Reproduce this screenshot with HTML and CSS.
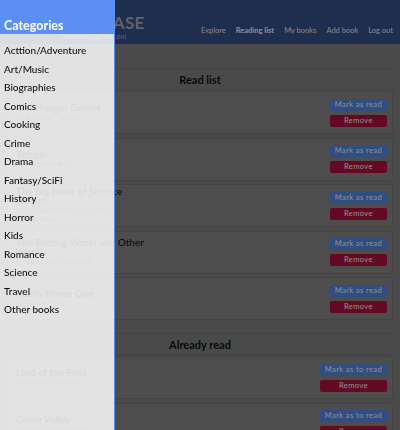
FILE: index.html
```html
<!DOCTYPE html>
<html lang="en">
<head>
<meta charset="utf-8">
<title>Bookbase - Reading list</title>
<link rel="stylesheet" href="styles.css">
</head>
<body>
<div class="page">
  <header class="topbar">
    <div class="brand">
      <div class="brand-name">BOOKBASE</div>
      <div class="brand-mail">bookbase@gmail.com</div>
    </div>
    <nav class="nav">
      <a>Explore</a>
      <a class="active">Reading list</a>
      <a>My books</a>
      <a>Add book</a>
      <a>Log out</a>
    </nav>
  </header>
  <main class="main">
    <section class="section">
      <h2 class="section-title">Read list</h2>
      <div class="card">
        <div class="book"><div class="book-title">The Hunger Games</div><div class="book-author">by Suzanne Collins</div></div>
        <div class="actions"><button class="btn btn-blue">Mark as read</button><button class="btn btn-red">Remove</button></div>
      </div>
      <div class="card">
        <div class="book"><div class="book-title">Temple</div><div class="book-author">by Matthew Reilly</div></div>
        <div class="actions"><button class="btn btn-blue">Mark as read</button><button class="btn btn-red">Remove</button></div>
      </div>
      <div class="card">
        <div class="book"><div class="book-title">The Big Book of Science Fiction</div><div class="book-author">by Jeff VanderMeer and Ann VanderMeer</div></div>
        <div class="actions"><button class="btn btn-blue">Mark as read</button><button class="btn btn-red">Remove</button></div>
      </div>
      <div class="card">
        <div class="book"><div class="book-title">The Blazing World and Other Worlds</div><div class="book-author">by Margaret Cavendish</div></div>
        <div class="actions"><button class="btn btn-blue">Mark as read</button><button class="btn btn-red">Remove</button></div>
      </div>
      <div class="card">
        <div class="book"><div class="book-title">Ready Player One</div><div class="book-author">by Ernest Cline</div></div>
        <div class="actions"><button class="btn btn-blue">Mark as read</button><button class="btn btn-red">Remove</button></div>
      </div>
    </section>
    <section class="section">
      <h2 class="section-title">Already read</h2>
      <div class="card">
        <div class="book"><div class="book-title">Lord of the Flies</div><div class="book-author">by William Golding</div></div>
        <div class="actions"><button class="btn btn-blue">Mark as to read</button><button class="btn btn-red">Remove</button></div>
      </div>
      <div class="card">
        <div class="book"><div class="book-title">Cedar Valley</div><div class="book-author">by Holly Chamberlain</div></div>
        <div class="actions"><button class="btn btn-blue">Mark as to read</button><button class="btn btn-red">Remove</button></div>
      </div>
    </section>
  </main>
</div>
<div class="overlay"></div>
<aside class="sidebar">
  <div class="sidebar-head">Categories</div>
  <ul class="cat-list">
    <li>Acttion/Adventure</li>
    <li>Art/Music</li>
    <li>Biographies</li>
    <li>Comics</li>
    <li>Cooking</li>
    <li>Crime</li>
    <li>Drama</li>
    <li>Fantasy/SciFi</li>
    <li>History</li>
    <li>Horror</li>
    <li>Kids</li>
    <li>Romance</li>
    <li>Science</li>
    <li>Travel</li>
    <li>Other books</li>
  </ul>
</aside>
</body>
</html>
```

FILE: styles.css
```css
* { box-sizing: border-box; }
html, body {
  margin: 0;
  padding: 0;
  width: 400px;
  height: 430px;
  overflow: hidden;
  font-family: "Lato", "Noto Sans", sans-serif;
  background: #888888;
}
.page {
  width: 400px;
}
.topbar {
  height: 44px;
  background: #385491;
  display: flex;
  justify-content: space-between;
  align-items: flex-end;
  padding: 0 7px 9px 50px;
}
.brand {
  display: flex;
  flex-direction: column;
  line-height: 1;
}
.brand-name {
  font-size: 17px;
  font-weight: 700;
  color: #b0b3bd;
  letter-spacing: 0.3px;
}
.brand-mail {
  font-size: 7px;
  color: #b0b3bd;
  margin-top: 2px;
  margin-bottom: -5px;
  padding-left: 10px;
}
.nav {
  display: flex;
  gap: 10px;
  padding-bottom: 0;
}
.nav a {
  font-size: 7.5px;
  color: #f2f2f2;
}
.nav a.active {
  font-weight: 700;
  color: #ffffff;
}
.main {
  padding: 24px 7px 0 7px;
}
.section + .section {
  margin-top: 13px;
}
.section-title {
  margin: 0 0 1px 0;
  height: 22px;
  line-height: 22px;
  text-align: center;
  font-size: 11px;
  font-weight: 700;
  color: #111111;
  border-top: 1px solid #7a7a7a;
  border-bottom: 1px solid #7a7a7a;
}
.card {
  display: flex;
  justify-content: space-between;
  align-items: center;
  height: 43px;
  background: #8d8d8d;
  border: 1px solid #7a7a7a;
  border-radius: 3px;
  padding: 0 5px 0 8px;
  margin-bottom: 3.5px;
}
.book {
  max-width: 128px;
}
.book-title {
  font-size: 10px;
  font-weight: 500;
  color: #141414;
  line-height: 9px;
}
.book-author {
  font-size: 8px;
  font-style: italic;
  color: #555555;
  line-height: 9px;
  margin-top: 1px;
}
.actions {
  display: flex;
  flex-direction: column;
  gap: 4px;
}
.btn {
  font-family: inherit;
  font-size: 7.5px;
  letter-spacing: 0.4px;
  color: #ffffff;
  border: none;
  border-radius: 2px;
  height: 12px;
  padding: 0 5px;
  line-height: 12px;
}
.btn-blue { background: #5a8ef0; }
.btn-red { background: #b61240; }
.overlay {
  position: fixed;
  inset: 0;
  background: rgba(0, 0, 0, 0.45);
}
.sidebar {
  position: fixed;
  left: 0;
  top: 0;
  width: 115px;
  height: 430px;
  background: rgba(255, 255, 255, 0.84);
  border-right: 1px solid #5b8ff0;
}
.sidebar-head {
  height: 34px;
  background: #5b8ff0;
  color: #ffffff;
  font-size: 12.5px;
  font-weight: 700;
  display: flex;
  align-items: flex-end;
  padding: 0 0 1px 4px;
}
.cat-list {
  list-style: none;
  margin: 0;
  padding: 7px 0 0 4px;
}
.cat-list li {
  height: 18.5px;
  line-height: 18.5px;
  font-size: 10px;
  font-weight: 500;
  color: #111111;
}
```
